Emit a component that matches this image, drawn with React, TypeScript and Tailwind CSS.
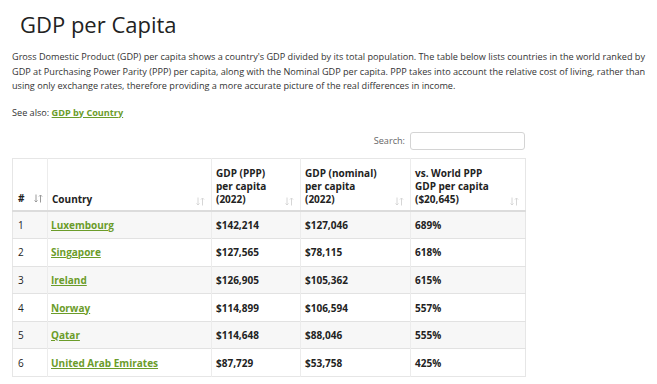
import React from "react";

const rows = [
  ["1", "Luxembourg", "$142,214", "$127,046", "689%"],
  ["2", "Singapore", "$127,565", "$78,115", "618%"],
  ["3", "Ireland", "$126,905", "$105,362", "615%"],
  ["4", "Norway", "$114,899", "$106,594", "557%"],
  ["5", "Qatar", "$114,648", "$88,046", "555%"],
  ["6", "United Arab Emirates", "$87,729", "$53,758", "425%"],
];

function SortIcon({ active = false }: { active?: boolean }) {
  return (
    <svg width="9" height="9" viewBox="0 0 9 9" className="shrink-0">
      <g stroke={active ? "#9a9a9a" : "#d6d6d6"} strokeWidth="1" fill="none">
        <path d="M2 0.5 V8" />
        <path d="M0.5 6.5 L2 8 L3.5 6.5" />
        <path d="M6.5 1 V8.5" />
        <path d="M5 2.5 L6.5 1 L8 2.5" />
      </g>
    </svg>
  );
}

export default function App() {
  return (
    <div
      className="w-[657px] h-[384px] bg-white text-[#333] overflow-hidden"
      style={{ fontFamily: '"Open Sans", sans-serif' }}
    >
      <h1 className="pl-[20px] pt-[8px] text-[22px] leading-[32px] text-[#222]">GDP per Capita</h1>
      <div className="pl-[12px] pt-[10px]">
        <p className="w-[642px] text-[9.15px] leading-[14.5px] text-[#333]">
          Gross Domestic Product (GDP) per capita shows a country's GDP divided by its total population. The table below lists countries in the world ranked by GDP at Purchasing Power Parity (PPP) per capita, along with the Nominal GDP per capita. PPP takes into account the relative cost of living, rather than using only exchange rates, therefore providing a more accurate picture of the real differences in income.
        </p>
        <p className="mt-[12px] text-[9.15px] leading-[14px]">
          See also:{" "}
          <a className="font-bold text-[#6b9c2a] underline">GDP by Country</a>
        </p>
        <div className="w-[513px] flex justify-end items-center gap-[5px] mt-[12px] text-[9.15px] text-[#666]">
          <span>Search:</span>
          <div className="w-[115px] h-[18px] border border-[#d4d4d4] rounded-[3px] bg-white" />
        </div>
        <table className="mt-[8px] w-[513px] table-fixed border-collapse border border-[#e6e6e6] text-[10px] font-bold text-[#222]">
          <colgroup>
            <col className="w-[35px]" />
            <col className="w-[164px]" />
            <col className="w-[89px]" />
            <col className="w-[110px]" />
            <col className="w-[115px]" />
          </colgroup>
          <thead>
            <tr className="h-[53px] border-b-2 border-[#dcdcdc]">
              <th className="align-bottom text-left pl-[5px] pr-[4px] pb-[4px] border-r border-[#ececec]">
                <div className="flex items-center justify-between">
                  <span>#</span>
                  <SortIcon active />
                </div>
              </th>
              <th className="align-bottom text-left px-[4px] pb-[4px] border-r border-[#ececec]">
                <div className="flex items-end justify-between pr-[2px]">
                  <span className="leading-[13px]">Country</span>
                  <SortIcon />
                </div>
              </th>
              <th className="align-bottom text-left px-[4px] pb-[4px] border-r border-[#ececec]">
                <div className="flex items-end justify-between pr-[2px]">
                  <span className="leading-[13px]">GDP (PPP)<br />per capita<br />(2022)</span>
                  <SortIcon />
                </div>
              </th>
              <th className="align-bottom text-left px-[4px] pb-[4px] border-r border-[#ececec]">
                <div className="flex items-end justify-between pr-[2px]">
                  <span className="leading-[13px]">GDP (nominal)<br />per capita<br />(2022)</span>
                  <SortIcon />
                </div>
              </th>
              <th className="align-bottom text-left px-[4px] pb-[4px]">
                <div className="flex items-end justify-between pr-[2px]">
                  <span className="leading-[13px]">vs. World PPP<br />GDP per capita<br />($20,645)</span>
                  <SortIcon />
                </div>
              </th>
            </tr>
          </thead>
          <tbody>
            {rows.map((r, i) => (
              <tr key={r[0]} className={`h-[27.6px] border-t border-[#e2e2e2] ${i % 2 === 0 ? "bg-[#f7f7f7]" : "bg-white"}`}>
                <td className="pl-[5px] pt-[1px] font-normal border-r border-[#ececec]">{r[0]}</td>
                <td className="pl-[3px] pr-[4px] pt-[1px] border-r border-[#ececec]">
                  <a className="text-[#6b9c2a] underline">{r[1]}</a>
                </td>
                <td className="px-[4px] pt-[1px] border-r border-[#ececec]">{r[2]}</td>
                <td className="px-[4px] pt-[1px] border-r border-[#ececec]">{r[3]}</td>
                <td className="px-[4px] pt-[1px]">{r[4]}</td>
              </tr>
            ))}
          </tbody>
        </table>
      </div>
    </div>
  );
}
